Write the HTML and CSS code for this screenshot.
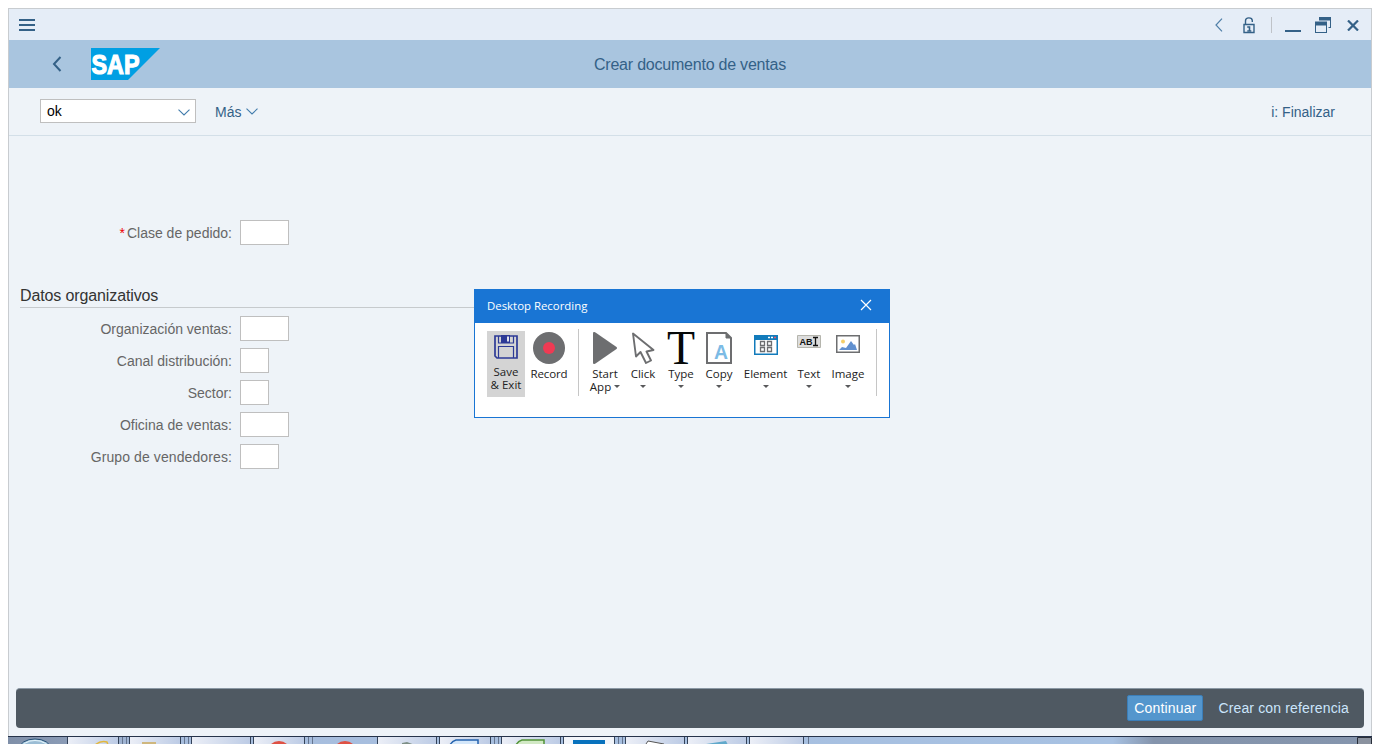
FILE: index.html
```html
<!DOCTYPE html>
<html lang="es">
<head>
<meta charset="utf-8">
<title>Crear documento de ventas</title>
<link rel="stylesheet" href="styles.css">
</head>
<body>
<main class="window">
  <header class="titlebar">
    <svg class="menu" width="16" height="12" viewBox="0 0 16 12"><path d="M0 1h16M0 6h16M0 11h16" stroke="#346187" stroke-width="2"/></svg>
    <div class="controls">
      <svg width="8" height="14" viewBox="0 0 8 14"><path d="M7 .7 1 7l6 6.300" fill="none" stroke="#4f7fa8" stroke-width="1.200"/></svg>
      <svg class="lock" width="12" height="17" viewBox="0 0 12 17"><path d="M2.500 7V3.800C2.500 0 9 0 9.300 3.500V5M1 7.500h10v8H1z" fill="none" stroke="#346187" stroke-width="1.400"/><path d="M4.200 10H6.500v4M4.300 14h4" stroke="#346187" stroke-width="1.600" fill="none"/></svg>
      <i class="divider"></i>
      <svg class="minimize" width="16" height="2"><path d="M0 1h16" stroke="#346187" stroke-width="2"/></svg>
      <svg class="restore" width="16" height="16" viewBox="0 0 16 16"><path d="M4 0h12v11h-2.500v-1H15V3.500H4zM0 4.500h12V16H0zM1 8.500V15h10V8.500z" fill="#346187" fill-rule="evenodd"/></svg>
      <svg class="close" width="12" height="11" viewBox="0 0 12 11"><path d="m1 .5 10 10M11 .5l-10 10" stroke="#346187" stroke-width="2.200"/></svg>
    </div>
  </header>
  <div class="brandbar">
    <svg class="back" width="10" height="16" viewBox="0 0 10 16"><path d="M8.500 1 2 8l6.500 7" fill="none" stroke="#346187" stroke-width="2"/></svg>
    <svg class="logo" width="70" height="32" viewBox="0 0 70 32"><path d="M0 0h69L37 32H0z" fill="#009fe3"/><text class="logotext" x=".5" y="26" textLength="48" lengthAdjust="spacingAndGlyphs">SAP</text></svg>
    <h1 class="title">Crear documento de ventas</h1>
  </div>
  <nav class="toolbar">
    <div class="command"><span>ok</span><svg width="12" height="7" viewBox="0 0 12 7"><path d="m.5.7 5.500 5.300L11.500.7" fill="none" stroke="#427cac" stroke-width="1.100"/></svg></div>
    <div class="more"><span>Más</span><svg width="12" height="7" viewBox="0 0 12 7"><path d="m.5.7 5.500 5.300L11.500.7" fill="none" stroke="#427cac" stroke-width="1.100"/></svg></div>
    <span class="finish">i: Finalizar</span>
  </nav>
  <section class="content">
    <div class="row"><label><b class="required">*</b>Clase de pedido:</label><span class="field w49"></span></div>
    <h2 class="section">Datos organizativos</h2>
    <div class="row"><label>Organización ventas:</label><span class="field w49"></span></div>
    <div class="row"><label>Canal distribución:</label><span class="field w29"></span></div>
    <div class="row"><label>Sector:</label><span class="field w29"></span></div>
    <div class="row"><label>Oficina de ventas:</label><span class="field w49"></span></div>
    <div class="row"><label class="wide">Grupo de vendedores:</label><span class="field w39"></span></div>
  </section>
  <footer class="footer"><span class="primary">Continuar</span><span class="secondary">Crear con referencia</span></footer>
</main>
<div class="taskbar">
  <svg width="1364" height="8" viewBox="8 0 1364 8">
    <defs>
      <linearGradient id="bar" gradientUnits="userSpaceOnUse" x1="8" x2="1372" y1="0" y2="0"><stop offset="0" stop-color="#7f8fa8"/><stop offset=".05" stop-color="#8c9db8"/><stop offset=".1" stop-color="#a7bddd"/><stop offset=".81" stop-color="#a7c1e2"/><stop offset=".84" stop-color="#8494ac"/><stop offset="1" stop-color="#8595ad"/></linearGradient>
      <linearGradient id="tab"><stop offset="0" stop-color="#eceff7"/><stop offset="1" stop-color="#bccbe5"/></linearGradient>
    </defs>
    <rect x="8" width="1364" height="8" fill="url(#bar)"/>
    <ellipse cx="35" cy="13" rx="16" ry="10" fill="#b6d3e6" stroke="#244e74"/><ellipse cx="35" cy="13" rx="13.500" ry="8.500" fill="#9bbdd5" stroke="#e5f5fc"/>
    <g stroke="#344359">
      <path fill="url(#tab)" d="M67.500 9V.5h51V9z"/><path fill="url(#tab)" d="M129.500 9V.5h51V9z"/><path fill="url(#tab)" d="M191.500 9V.5h59V9z"/><path fill="url(#tab)" d="M253.500 9V.5h51V9z"/><path fill="url(#tab)" d="M377.500 9V.5h59V9z"/><path fill="url(#tab)" d="M439.500 9V.5h51V9z"/><path fill="url(#tab)" d="M501.500 9V.5h59V9z"/><path fill="#f2f5fa" d="M563.500 9V.5h51V9z"/><path fill="url(#tab)" d="M625.500 9V.5h59V9z"/><path fill="url(#tab)" d="M687.500 9V.5h59V9z"/><path fill="url(#tab)" d="M749.500 9V.5h54V9z"/>
    </g>
    <path d="M122.500 1v8M126.500 1v8M184.500 1v8M188.500 1v8M308.500 1v8M312.500 1v8M494.500 1v8M498.500 1v8M618.500 1v8M622.500 1v8M808.500 1v8" stroke="#65758f"/>
    <circle cx="279" cy="17" r="12" fill="#df5144"/><circle cx="345" cy="17" r="12" fill="#df5144"/>
    <path d="M95 9q6-5 12-3l1 3" fill="none" stroke="#e2b73c" stroke-width="1.500"/><path d="M142 6h14v3h-14z" fill="#cfb77e"/>
    <path d="m402 7 5-1 8 3h-13z" fill="#7d8f86"/>
    <path d="M450 9q2-4 6-5h22v5" fill="#d4e7fa" stroke="#2463ae" stroke-width="1.500"/><path d="M516 9q2-4 6-5h22v5" fill="#d2e9c5" stroke="#519337" stroke-width="1.500"/>
    <path d="M573 4h32v5h-32z" fill="#0872bd"/><path d="m646 8 2-3 16 3" fill="#fff" stroke="#555"/><path d="m706 8 20-3 2 4" fill="#61a9cb"/>
    <path d="M8 .5h1364" stroke="#26334a"/><path d="M1357.500 9V1.500h14V9z" fill="#8a929f" stroke="#292f3a"/>
  </svg>
</div>

<div class="dialog">
  <div class="dialoghead"><span>Desktop Recording</span><svg width="12" height="12" viewBox="0 0 12 12"><path d="m1 1 10 10M11 1 1 11" stroke="#fff" stroke-width="1.200"/></svg></div>
  <div class="tools">
    <div class="tool save"><svg width="24" height="24" viewBox="0 0 24 24"><path d="M1 1h22v22H3l-2-2z" fill="none" stroke="#2d3a96" stroke-width="1.700"/><path d="M4.500 1v7h15V1M4.500 23V11.500h15V23" fill="none" stroke="#2d3a96" stroke-width="1.200"/><path d="M7 0h9v8H7z" fill="#2d3a96"/><path d="M13 1.500h2v5h-2z" fill="#e3e4ec"/></svg><span>Save</span><span>&amp; Exit</span></div>
    <div class="tool"><svg width="32" height="32"><circle cx="16" cy="16" r="16" fill="#6d6e70"/><circle cx="16" cy="16" r="6" fill="#ef3a53"/></svg><span class="t-record">Record</span></div>
    <i class="separator"></i>
    <div class="tool"><svg width="24" height="32"><path d="M0 1.500V30.500q0 2.500 2.500 1L23.500 17q1-1 0-2L2.500.5Q0-1 0 1.500z" fill="#6d6e70"/></svg><span>Start</span><span>App<i class="arrow inline"></i></span></div>
    <div class="tool"><svg width="24" height="32" viewBox="0 0 24 32"><path d="M2 1.500 5 24.500l4.500-4.500 5.500 11 5-2.500-4.500-9 7-1.500z" fill="#fff" stroke="#6d6e70" stroke-width="1.900" stroke-linejoin="round"/></svg><span>Click</span><i class="arrow"></i></div>
    <div class="tool"><svg class="serif" width="28" height="32"><text class="bigT" x="0" y="32" textLength="28" lengthAdjust="spacingAndGlyphs">T</text></svg><span>Type</span><i class="arrow"></i></div>
    <div class="tool"><svg width="26" height="32" viewBox="0 0 26 32"><path d="M1 1h19l5 5v25H1z" fill="#fff" stroke="#6d6e70" stroke-width="2"/><path d="M20 1v5h5z" fill="#6d6e70" stroke="#6d6e70"/><text class="bigA" x="8" y="26.500" textLength="14" lengthAdjust="spacingAndGlyphs">A</text></svg><span>Copy</span><i class="arrow"></i></div>
    <div class="tool"><svg class="small20" width="24" height="20" viewBox="0 0 24 20"><path d="M.75.75h22.500v18.500H.75z" fill="#fff" stroke="#127bbb" stroke-width="1.500"/><path d="M0 0h24v5H0z" fill="#127bbb"/><path d="M14 2.500h2M17 2.500h2" stroke="#fff" stroke-width="1.300"/><path d="M20 2.500h2" stroke="#ef5366" stroke-width="1.500"/><path d="M6.500 6.500h4v4h-4zM13.500 6.500h4v4h-4zM6.500 12.500h4v4h-4zM13.500 12.500h4v4h-4z" fill="#fff" stroke="#6d6e70" stroke-width="1.300"/></svg><span class="t-element">Element</span><i class="arrow"></i></div>
    <div class="tool"><svg class="small13" width="24" height="13" viewBox="0 0 24 13"><path d="M.5.5h23v12H.5z" fill="#ddd" stroke="#b5b5ad"/><text class="abi" x="2.500" y="9.500" textLength="13" lengthAdjust="spacingAndGlyphs">AB</text><path d="M16 2.500h5M18.500 2v8.500M16 10.500h5" stroke="#111" stroke-width="1.300"/></svg><span>Text</span><i class="arrow"></i></div>
    <div class="tool"><svg class="small18" width="24" height="18" viewBox="0 0 24 18"><path d="M.75.75h22.500v16.500H.75z" fill="#fff" stroke="#6d6e70" stroke-width="1.500"/><circle cx="7" cy="6.500" r="2" fill="#f5cf6a"/><path d="m3 15 3-3 4 1 5-7 3 4 1-1 2 6z" fill="#6190cf"/></svg><span>Image</span><i class="arrow"></i></div>
    <i class="separator"></i>
  </div>
</div>
</body>
</html>
```

FILE: styles.css
```css
* { box-sizing: border-box; }
body { margin: 0; padding: 8px 8px 0; height: 744px; overflow: hidden; background: #fff; font: 14px/16px "Liberation Sans", Arial, sans-serif; color: #666; }
svg { display: block; flex: none; }
.window { height: 728px; background: #eef3f8; display: flex; flex-direction: column; border: 1px solid #c8ccd0; border-bottom: 0; }

.titlebar { height: 31px; flex: none; background: #e5edf7; display: flex; align-items: center; justify-content: space-between; padding: 1px 12px 0 10px; }
.controls { display: flex; align-items: center; height: 30px; }
.lock { margin-left: 20px; }
.divider { width: 1px; height: 16px; background: #bfc3c8; margin-left: 16px; }
.minimize { margin: 11px 0 0 13px; }
.restore { margin-left: 14px; }
.close { margin-left: 16px; }

.brandbar { height: 48px; flex: none; background: #a9c5df; display: flex; align-items: center; }
.back { margin-left: 43px; }
.logo { margin-left: 29px; }
.logotext { font: bold 28px "Liberation Sans", Arial, sans-serif; fill: #fff; stroke: #fff; stroke-width: 1.2px; }
.title { margin: 1px 0 0 433px; font-size: 16px; line-height: 20px; font-weight: 400; letter-spacing: -.22px; color: #346187; }

.toolbar { height: 48px; flex: none; border-bottom: 1px solid #d3dfe8; display: flex; align-items: center; padding: 0 36px 0 31px; color: #346187; }
.command { width: 156px; height: 24px; margin-bottom: 2px; border: 1px solid #bfbfbf; background: #fff; display: flex; align-items: center; justify-content: space-between; padding: 0 5px 0 6px; color: #000; }
.command svg { margin-top: 3px; }
.more { display: flex; align-items: center; gap: 5px; margin-left: 19px; }
.finish { margin-left: auto; }

.content { flex: 1; padding: 84px 0 0 11px; }
.row { display: flex; height: 25px; align-items: center; margin-bottom: 7px; }
.row label { width: 212px; text-align: right; margin-right: 8px; }
.row .wide { letter-spacing: .1px; }
.required { font-weight: 400; color: #e00; margin-right: 2px; }
.field { height: 25px; border: 1px solid #bfbfbf; background: #fff; }
.w49 { width: 49px; }
.w39 { width: 39px; }
.w29 { width: 29px; }
.section { margin: 41px 0 8px; width: 600px; height: 22px; border-bottom: 1px solid #c6cacd; font-size: 16px; line-height: 20px; font-weight: 400; letter-spacing: -.12px; color: #333; }

.footer { height: 40px; flex: none; margin: 0 7px 8px; border-radius: 4px; background: #4f5962; border-top: 1px solid #8b98a4; display: flex; align-items: center; justify-content: flex-end; padding: 0 15px 2px 0; color: #cbe5fc; letter-spacing: .15px; }
.primary { width: 76px; height: 26px; line-height: 24px; text-align: center; background: #5496cd; border: 1px solid #3b7eb8; border-radius: 2px; color: #fff; margin-right: 15px; }
.taskbar { height: 8px; }

.dialog { position: absolute; left: 474px; top: 289px; width: 416px; height: 129px; border: 1px solid #1975d4; background: #fff; font: 11.5px/13px "Open Sans", "Noto Sans", sans-serif; color: #222; }
.dialoghead { height: 33px; background: #1975d4; color: #fff; display: flex; align-items: center; justify-content: space-between; padding: 0 17px 2px 12px; font-size: 11.4px; }
.dialoghead svg { margin-bottom: 1px; }
.tools { display: grid; grid-template-columns: 38px 48px 13px 38px 38px 38px 38px 55px 32px 46px 13px; padding: 6px 0 0 12px; }
.tool { display: flex; flex-direction: column; align-items: center; padding-top: 3px; height: 68px; white-space: nowrap; }
.tool > svg { margin-bottom: 3px; }
.save { margin-top: 2px; height: 66px; padding-top: 4px; background: #d4d4d4; }
.tool.save > svg { margin-bottom: 6px; }
.tool > .small20 { margin: 3px 0 12px; }
.tool > .small13 { margin: 3px 0 19px; }
.tool > .small18 { margin: 3px 0 14px; }
.t-record { letter-spacing: -.1px; }
.t-element { letter-spacing: -.1px; }
.separator { width: 1px; height: 67px; background: #c6c6c6; justify-self: center; margin-right: 2px; }
.arrow { border: 3.5px solid transparent; border-top-color: #58595b; border-bottom: 0; margin-top: 5px; }
.inline { display: inline-block; margin: 0 0 3px 3px; }
.serif { overflow: visible; }
.bigT { font: 48px "Liberation Serif", serif; fill: #050909; }
.bigA { font: bold 20px "Liberation Sans", sans-serif; fill: #7cbbe5; }
.abi { font: bold 9px "Liberation Sans", sans-serif; fill: #111; }
```
